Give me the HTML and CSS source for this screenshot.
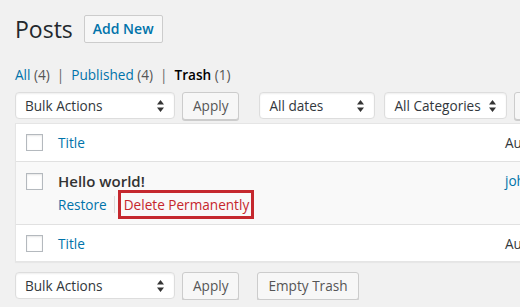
FILE: index.html
```html
<!DOCTYPE html>
<html lang="en">
<head>
    <meta charset="UTF-8">
    <title>Posts</title>
    <link rel="stylesheet" href="styles.css">
</head>
<body>
    <div class="wrap">
        <div class="page-head">
            <h1>Posts</h1>
            <a class="add-new">Add New</a>
        </div>

        <ul class="subsubsub">
            <li><a>All</a> <span class="count">(4)</span></li>
            <li class="sep">|</li>
            <li><a>Published</a> <span class="count">(4)</span></li>
            <li class="sep">|</li>
            <li class="current">Trash <span class="count">(1)</span></li>
        </ul>

        <div class="tablenav">
            <div class="select wide">Bulk Actions <span class="arrows"><svg width="7" height="12" viewBox="0 0 7 12"><path d="M3.5 0L7 4.5H0z M3.5 12L0 7.5H7z" fill="#333"/></svg></span></div>
            <div class="button">Apply</div>
            <div class="select dates">All dates <span class="arrows"><svg width="7" height="12" viewBox="0 0 7 12"><path d="M3.5 0L7 4.5H0z M3.5 12L0 7.5H7z" fill="#333"/></svg></span></div>
            <div class="select cats">All Categories <span class="arrows"><svg width="7" height="12" viewBox="0 0 7 12"><path d="M3.5 0L7 4.5H0z M3.5 12L0 7.5H7z" fill="#333"/></svg></span></div>
            <div class="button">Filter</div>
        </div>

        <div class="list-table">
            <div class="row head">
                <div class="cell check"><span class="checkbox"></span></div>
                <div class="cell title"><a>Title</a></div>
                <div class="cell author">Author</div>
            </div>
            <div class="row post">
                <div class="cell check"><span class="checkbox"></span></div>
                <div class="cell title">
                    <strong>Hello world!</strong>
                    <div class="row-actions">
                        <a>Restore</a>
                        <span class="bar"></span>
                        <a class="delete">Delete Permanently</a>
                    </div>
                </div>
                <div class="cell author"><a>john</a></div>
            </div>
            <div class="row foot">
                <div class="cell check"><span class="checkbox"></span></div>
                <div class="cell title"><a>Title</a></div>
                <div class="cell author">Author</div>
            </div>
        </div>

        <div class="tablenav bottom">
            <div class="select wide">Bulk Actions <span class="arrows"><svg width="7" height="12" viewBox="0 0 7 12"><path d="M3.5 0L7 4.5H0z M3.5 12L0 7.5H7z" fill="#333"/></svg></span></div>
            <div class="button">Apply</div>
            <div class="button trash">Empty Trash</div>
        </div>
    </div>
</body>
</html>
```

FILE: styles.css
```css
html, body {
    margin: 0;
    padding: 0;
    overflow: hidden;
}
body {
    font-family: 'Open Sans', 'Noto Sans', sans-serif;
    font-size: 13.6px;
    color: #444;
    background-color: #f1f1f1;
}
a {
    color: #0073aa;
}
.wrap {
    padding: 15px 0 0 15px;
    width: 640px;
}
.page-head {
    display: flex;
    align-items: center;
    gap: 11px;
    height: 28px;
}
h1 {
    margin: 0;
    font-size: 23px;
    font-weight: 400;
    color: #23282d;
}
.add-new {
    display: inline-block;
    box-sizing: border-box;
    height: 28px;
    line-height: 26px;
    padding: 0 8px;
    border: 1px solid #ccc;
    border-radius: 2px;
    background: #f7f7f7;
    font-size: 14px;
    font-weight: 600;
}
.subsubsub {
    list-style: none;
    margin: 22px 0 0;
    padding: 0;
    display: flex;
    gap: 7px;
    height: 20px;
    line-height: 20px;
}
.count {
    color: #555;
}
.sep {
    color: #666;
}
.current {
    font-weight: 600;
    color: #000;
}
.current .count {
    font-weight: 400;
}
.tablenav {
    display: flex;
    gap: 7px;
    margin-top: 7px;
    height: 28px;
    white-space: nowrap;
}
.select {
    box-sizing: border-box;
    height: 27px;
    line-height: 25px;
    padding: 0 9px;
    border: 1px solid #ddd;
    border-radius: 4px;
    background: #fff;
    box-shadow: inset 0 1px 2px rgba(0, 0, 0, 0.07);
    color: #32373c;
    display: flex;
    justify-content: space-between;
    align-items: center;
    flex-shrink: 0;
}
.select.wide {
    width: 160px;
}
.select.dates {
    width: 116px;
    margin-left: 13px;
}
.select.cats {
    width: 123px;
    margin-left: 2px;
}
.arrows {
    display: flex;
    padding-right: 1px;
}
.button {
    box-sizing: border-box;
    height: 28px;
    line-height: 26px;
    padding: 0 10px;
    border: 1px solid #ccc;
    border-radius: 3px;
    background: #f7f7f7;
    box-shadow: 0 1px 0 #ccc;
    color: #555;
    flex-shrink: 0;
}
.list-table {
    margin-top: 3px;
    background: #fff;
    border: 1px solid #e5e5e5;
    box-shadow: 0 1px 1px rgba(0, 0, 0, 0.04);
}
.row {
    display: flex;
}
.row.head {
    height: 37px;
    align-items: center;
    border-bottom: 1px solid #e1e1e1;
}
.row.post {
    height: 62px;
    background: #f9f9f9;
}
.row.foot {
    height: 36px;
    align-items: center;
    border-top: 1px solid #e1e1e1;
}
.cell.check {
    width: 42px;
    padding-left: 10px;
    box-sizing: border-box;
}
.row.post .cell.check {
    padding-top: 11px;
}
.checkbox {
    display: block;
    box-sizing: border-box;
    width: 17px;
    height: 17px;
    border: 1px solid #b4b9be;
    background: #fff;
    box-shadow: inset 0 1px 2px rgba(0, 0, 0, 0.1);
}
.cell.title {
    width: 447px;
}
.row.post .cell.title {
    padding-top: 9px;
}
.row.post strong {
    display: block;
    color: #333;
    font-size: 15px;
    font-weight: 600;
    line-height: 20px;
}
.row-actions {
    display: flex;
    align-items: center;
    margin-top: -1px;
    height: 29px;
}
.bar {
    width: 1px;
    height: 17px;
    background: #ddd;
    margin: 0 3px 0 7px;
}
.delete {
    color: #c6262c;
    border: 3px solid #c5282e;
    padding: 0 2px 0 3px;
    line-height: 23px;
}
.row.head .cell.author,
.row.foot .cell.author {
    color: #32373c;
}
.row.post .cell.author {
    padding-top: 9px;
    line-height: 20px;
}
.tablenav.bottom {
    margin-top: 10px;
}
.button.trash {
    margin-left: 11px;
}
```
